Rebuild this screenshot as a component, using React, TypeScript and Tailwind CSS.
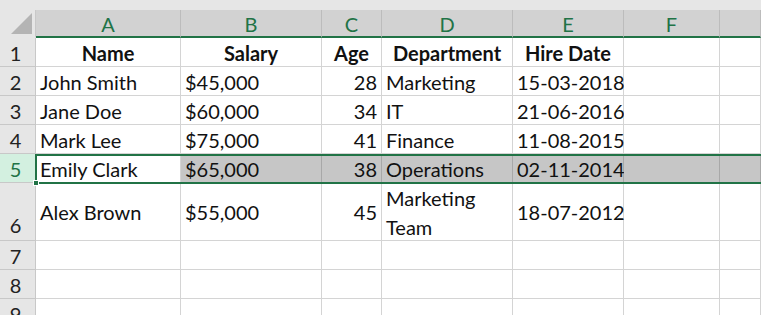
import React from 'react';

const cols = ['A', 'B', 'C', 'D', 'E', 'F', ''];

type Row = { n: number; cells: string[]; tall?: boolean; head?: boolean };

const rows: Row[] = [
  { n: 1, cells: ['Name', 'Salary', 'Age', 'Department', 'Hire Date', '', ''], head: true },
  { n: 2, cells: ['John Smith', '$45,000', '28', 'Marketing', '15-03-2018', '', ''] },
  { n: 3, cells: ['Jane Doe', '$60,000', '34', 'IT', '21-06-2016', '', ''] },
  { n: 4, cells: ['Mark Lee', '$75,000', '41', 'Finance', '11-08-2015', '', ''] },
  { n: 5, cells: ['Emily Clark', '$65,000', '38', 'Operations', '02-11-2014', '', ''] },
  { n: 6, cells: ['Alex Brown', '$55,000', '45', 'Marketing Team', '18-07-2012', '', ''], tall: true },
  { n: 7, cells: ['', '', '', '', '', '', ''] },
  { n: 8, cells: ['', '', '', '', '', '', ''] },
  { n: 9, cells: ['', '', '', '', '', '', ''] },
];

const App = () => {
  return (
    <div className="w-[761px] h-[315px] overflow-hidden bg-white text-[20px] text-[#111] font-['Lato','Liberation_Sans',sans-serif]">
      <div className="h-[10px] bg-[#e6e6e6]" />
      <div className="relative grid grid-cols-[36px_145px_141px_60px_131px_111px_96px_1fr]">
        {/* corner */}
        <div className="relative h-[28px] bg-[#e6e6e6] border-r border-[#c8c8c8] border-b-2 border-b-[#e6e6e6]">
          <div className="absolute right-[3px] bottom-[2px] w-0 h-0 border-l-[21px] border-l-transparent border-b-[21px] border-b-[#b4b4b4]" />
        </div>
        {cols.map((c, i) => (
          <div
            key={i}
            className="h-[28px] pt-[2px] bg-[#d2d2d2] border-r border-[#bcbcbc] border-b-2 border-b-[#217346] flex items-center justify-center text-[#217346] leading-none"
          >
            {c}
          </div>
        ))}

        {rows.map((r) => {
          const sel = r.n === 5;
          const h = r.tall ? 'h-[58px]' : 'h-[29px]';
          return (
            <React.Fragment key={r.n}>
              <div
                className={`${h} flex justify-center pr-1 border-r border-b ${
                  sel
                    ? 'bg-[#d3f0e0] text-[#217346] border-[#c8c8c8] items-center pt-[2px]'
                    : `bg-[#e6e6e6] text-[#222] border-[#c8c8c8] ${r.tall ? 'items-end' : 'items-center pt-[2px]'}`
                }`}
              >
                {r.n}
              </div>
              {r.cells.map((v, i) => {
                const num = i === 2;
                const bg = sel && i > 0 ? 'bg-[#c6c6c6]' : 'bg-white';
                const border = sel && i > 0 ? 'border-[#a8a8a8]' : 'border-[#d4d4d4]';
                return (
                  <div
                    key={i}
                    className={`${h} ${bg} ${border} border-r border-b flex items-center pt-[2px] leading-[29px] whitespace-nowrap ${
                      r.head ? 'justify-center font-bold' : num ? 'justify-end pr-[4px]' : 'justify-start pl-[4px]'
                    }`}
                  >
                    {v === 'Marketing Team' ? (
                      <div className="flex flex-col">
                        <span>Marketing</span>
                        <span>Team</span>
                      </div>
                    ) : (
                      v
                    )}
                  </div>
                );
              })}
            </React.Fragment>
          );
        })}

        {/* selection outline for row 5 */}
        <div className="absolute left-[35px] right-0 top-[144px] h-[30px] border-2 border-r-0 border-[#217346] pointer-events-none" />
        <div className="absolute left-[33px] top-[170px] w-[6px] h-[6px] bg-[#217346] border border-white" />
      </div>
    </div>
  );
};

export default App;
